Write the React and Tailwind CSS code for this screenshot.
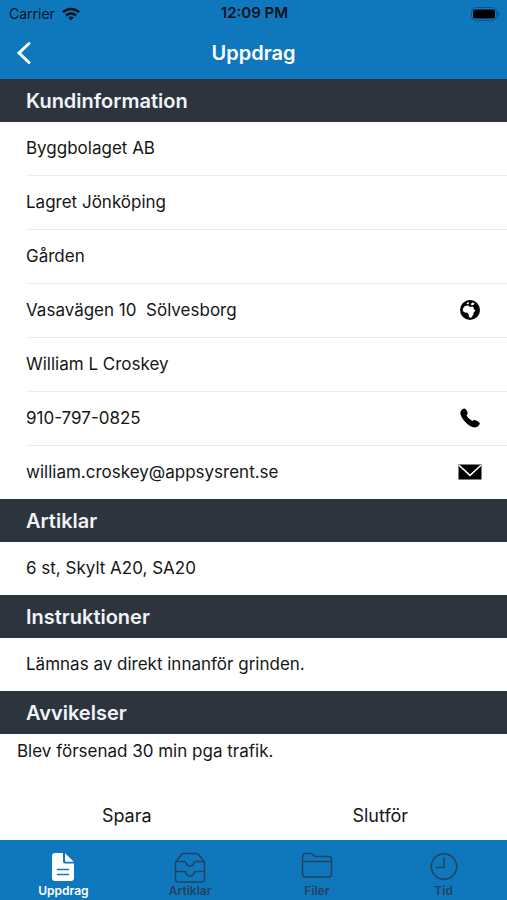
function WifiIcon() {
  return (
    <svg className="h-[14px] w-[18px]" viewBox="0 0 18 14" fill="none" stroke="#06121c" strokeWidth="2.5" aria-hidden="true">
      <path d="M1 5.2C5.4 0.8 12.6 0.8 17 5.2" />
      <path d="M4 8.5C6.8 5.7 11.2 5.7 14 8.5" />
      <path d="M9 13.4L6.2 10.6C7.8 9.2 10.2 9.2 11.8 10.6Z" fill="#06121c" stroke="none" />
    </svg>
  );
}

function BatteryIcon() {
  return (
    <svg className="h-[14px] w-[30px]" viewBox="0 0 30 14" aria-hidden="true">
      <rect x="1.500" y="0.5" width="25" height="13" rx="4" fill="none" stroke="#0b558a" />
      <rect x="3" y="2.500" width="22" height="9" rx="2" fill="#000" />
      <path d="M27.500 4.500c2.6.8 2.6 4.2 0 5z" fill="#0b558a" />
    </svg>
  );
}

function GlobeIcon() {
  return (
    <svg className="size-[20px]" viewBox="0 0 20 20" aria-hidden="true">
      <circle cx="10" cy="10" r="10" fill="#000" />
      <path
        d="M2.800 8.500L5 6 8.200 5.600 10 7 12.200 6.600 13.600 7.400 13.900 9.300 15.500 10.600 13.800 12.300 13.300 14.800 11.800 17 10.300 18 8.900 16.600 8.700 14.200 7.400 12.700 4.800 12.600 2.800 10.900z"
        fill="#fff"
      />
      <path d="M6.600 3.200L8.800 2 9 3.400 7.400 4.600zM10.800 4L12.600 2.200 14.800 3.400 13.400 5 11.600 5.300z" fill="#fff" />
    </svg>
  );
}

function PhoneIcon() {
  return (
    <svg className="size-[20px]" viewBox="0 0 20 20" aria-hidden="true">
      <path
        d="M2.800 1Q4.700 -.1 6 1.500Q7.700 3.800 7.600 5.500Q7.400 6.600 6.500 7.400Q8 10.600 12.300 12.900Q13.500 11.800 14.900 12Q17.200 12.600 19.300 14.400Q20.200 15.600 19.300 16.800Q17.700 19.300 14.900 19.500Q10 19 5.200 14Q.5 8.700 .3 4.700Q.6 2.400 2.800 1z"
        fill="#000"
      />
    </svg>
  );
}

function MailIcon() {
  return (
    <svg className="h-[16px] w-[24px]" viewBox="0 0 24 16" aria-hidden="true">
      <rect x="0.5" y="0.5" width="23" height="15" fill="#000" />
      <path d="M1 1.2L12 11.4 23 1.2" fill="none" stroke="#fff" strokeWidth="1.5" />
    </svg>
  );
}

function DocumentIcon() {
  return (
    <svg className="size-[32px]" viewBox="0 0 32 32" aria-hidden="true">
      <path d="M8 2h8v8.500a2 2 0 0 0 2 2h9V27a3 3 0 0 1-3 3H8a3 3 0 0 1-3-3V5a3 3 0 0 1 3-3z" fill="#fff" />
      <path d="M18 2.200L26.800 10.800H19a1 1 0 0 1-1-1z" fill="#fff" />
      <path d="M10.500 18.500h11M10.500 23.500h11" stroke="#0f78bd" strokeWidth="1.600" strokeLinecap="round" />
    </svg>
  );
}

function DrawerIcon() {
  return (
    <svg className="size-[32px]" viewBox="0 0 32 32" fill="none" stroke="currentColor" strokeWidth="1.500" strokeLinejoin="round" aria-hidden="true">
      <path d="M1.500 12V11L7.500 3.500Q8.200 2.500 9.500 2.500H22.500Q23.800 2.500 24.500 3.500L30.500 11V28Q30.500 31 27.500 31H4.500Q1.500 31 1.500 28V12Q1.500 10.500 3 10.500H10.500Q11.500 10.500 12 12Q13 15 16 15T20 12Q20.500 10.500 21.500 10.500H29Q30.500 10.500 30.500 12" />
      <path d="M1.500 20.500H11.500Q12.500 25 16 25T20.500 20.500H30.500" />
    </svg>
  );
}

function FolderIcon() {
  return (
    <svg className="size-[32px]" viewBox="0 0 32 32" fill="none" stroke="currentColor" strokeWidth="1.500" strokeLinejoin="round" aria-hidden="true">
      <path d="M4.500 2.500H9Q10.500 2.500 11.500 3.500L12.500 4.500Q13.500 5.500 15 5.500H27.500Q30.500 5.500 30.500 8.500V23Q30.500 26 27.500 26H4.500Q1.500 26 1.500 23V5.500Q1.500 2.500 4.500 2.500zM1.500 10.500H30.500" />
    </svg>
  );
}

function ClockIcon() {
  return (
    <svg className="size-[32px]" viewBox="0 0 32 32" fill="none" stroke="currentColor" strokeWidth="1.500" strokeLinecap="round" aria-hidden="true">
      <circle cx="16" cy="15.500" r="12.700" />
      <path d="M16 7V16.500H8.500" />
    </svg>
  );
}

function SectionTitle({ id, children }) {
  return (
    <h2 id={id} className="flex h-[43px] items-center bg-[#2d343d] px-[26px] text-xl font-semibold text-[#f1f4f9]">
      {children}
    </h2>
  );
}

function RowList({ rows }) {
  return (
    <ul className="divide-y divide-[#ececec] pl-[26px]">
      {rows.map((row) => (
        <li key={row.text} className="flex items-center justify-between py-3 pr-[25px]">
          <span className="leading-[29px] whitespace-pre">{row.text}</span>
          {row.icon && (
            <a href={row.href} aria-label={row.label} className="flex w-[24px] justify-center pb-[2px]">
              {row.icon}
            </a>
          )}
        </li>
      ))}
    </ul>
  );
}

const contactRows = [
  { text: 'Byggbolaget AB' },
  { text: 'Lagret Jönköping' },
  { text: 'Gården' },
  { text: 'Vasavägen 10  Sölvesborg', label: 'Visa karta', href: '#karta', icon: <GlobeIcon /> },
  { text: 'William L Croskey' },
  { text: '910-797-0825', label: 'Ring', href: 'tel:910-797-0825', icon: <PhoneIcon /> },
  { text: 'william.croskey@appsysrent.se', label: 'Skicka e-post', href: 'mailto:william.croskey@appsysrent.se', icon: <MailIcon /> },
];

const articleRows = [{ text: '6 st, Skylt A20, SA20' }];

const instructionRows = [{ text: 'Lämnas av direkt innanför grinden.' }];

const tabs = [
  { label: 'Uppdrag', Icon: DocumentIcon, active: true },
  { label: 'Artiklar', Icon: DrawerIcon },
  { label: 'Filer', Icon: FolderIcon },
  { label: 'Tid', Icon: ClockIcon },
];

export default function App() {
  return (
    <div className="flex min-h-screen flex-col bg-white font-['Inter','Liberation_Sans',sans-serif] text-[17px] text-[#161616]">
      <header className="bg-[#0f78bd]">
        <div className="grid h-[27px] grid-cols-3 items-center pr-[7px] pl-[9px] text-[#06121c]">
          <div className="flex items-center gap-[7px] text-[14px]">
            <span>Carrier</span>
            <WifiIcon />
          </div>
          <span className="text-center text-[15px] font-semibold">12:09 PM</span>
          <div className="flex justify-end">
            <BatteryIcon />
          </div>
        </div>
        <div className="grid h-[52px] grid-cols-[48px_1fr_48px] items-center">
          <button type="button" aria-label="Tillbaka" className="flex h-full items-center pl-4">
            <svg className="h-[24px] w-[16px]" viewBox="0 0 16 24" fill="none" stroke="#fff" strokeWidth="3" strokeLinecap="round" aria-hidden="true">
              <path d="M13 2.500L3 12L13 21.500" />
            </svg>
          </button>
          <h1 className="text-center text-xl font-semibold text-white">Uppdrag</h1>
        </div>
      </header>

      <main className="flex flex-1 flex-col">
        <SectionTitle>Kundinformation</SectionTitle>
        <RowList rows={contactRows} />
        <SectionTitle>Artiklar</SectionTitle>
        <RowList rows={articleRows} />
        <SectionTitle>Instruktioner</SectionTitle>
        <RowList rows={instructionRows} />
        <SectionTitle id="avvikelser">Avvikelser</SectionTitle>
        <textarea
          aria-labelledby="avvikelser"
          defaultValue="Blev försenad 30 min pga trafik."
          className="block w-full flex-1 resize-none px-[17px] py-[5px] leading-6 outline-none"
        />
        <div className="grid h-12 grid-cols-2 text-lg">
          <button type="button">Spara</button>
          <button type="button">Slutför</button>
        </div>
      </main>

      <nav className="grid h-[60px] grid-cols-4 bg-[#0f78bd]">
        {tabs.map(({ label, Icon, active }) => (
          <button
            key={label}
            type="button"
            aria-current={active ? 'page' : undefined}
            className={`flex flex-col items-center justify-end pb-[1px] text-[12px] leading-[16px] font-semibold ${active ? 'text-white' : 'text-[#24425c]'}`}
          >
            <Icon />
            {label}
          </button>
        ))}
      </nav>
    </div>
  );
}
